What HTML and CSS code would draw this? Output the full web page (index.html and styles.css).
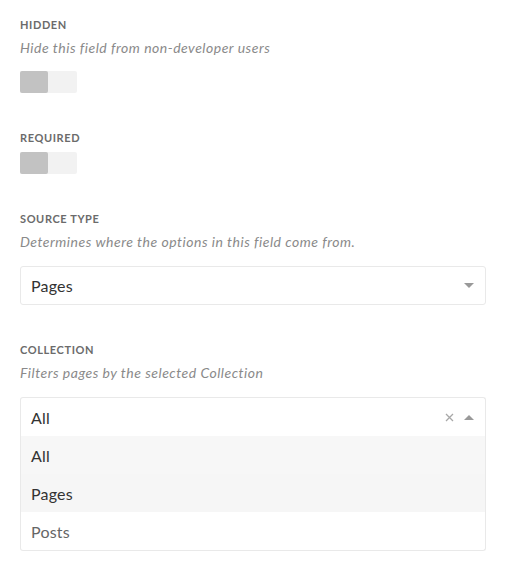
FILE: index.html
```html
<!DOCTYPE html>
<html>
<head>
<meta charset="utf-8">
<link rel="stylesheet" href="styles.css">
</head>
<body>
<div class="form">
  <div class="field">
    <div class="label">Hidden</div>
    <div class="desc">Hide this field from non-developer users</div>
    <div class="toggle toggle-desc"><span class="knob"></span></div>
  </div>
  <div class="field">
    <div class="label">Required</div>
    <div class="toggle toggle-label"><span class="knob"></span></div>
  </div>
  <div class="field">
    <div class="label">Source Type</div>
    <div class="desc">Determines where the options in this field come from.</div>
    <div class="select">
      <span class="value">Pages</span>
      <span class="caret caret-down"></span>
    </div>
  </div>
  <div class="field">
    <div class="label">Collection</div>
    <div class="desc">Filters pages by the selected Collection</div>
    <div class="dropdown">
      <div class="select select-open">
        <span class="value">All</span>
        <span class="clear">
          <svg width="9" height="9" viewBox="0 0 9 9"><path d="M1 1L8 8M8 1L1 8" stroke="#a8a8a8" stroke-width="1.3" fill="none"/></svg>
        </span>
        <span class="caret caret-up"></span>
      </div>
      <div class="menu">
        <div class="option option-selected">All</div>
        <div class="option option-focused">Pages</div>
        <div class="option">Posts</div>
      </div>
    </div>
  </div>
</div>
</body>
</html>
```
FILE: styles.css
```css
html, body {
  margin: 0;
  padding: 0;
  background: #ffffff;
}
body {
  font-family: Lato, "Noto Sans", sans-serif;
  color: #333;
}
.form {
  padding: 17px 34px 0 20px;
}
.field {
  margin-bottom: 37px;
}
.label {
  font-size: 11px;
  line-height: 16px;
  font-weight: 700;
  letter-spacing: 0.6px;
  text-transform: uppercase;
  color: #6b6b6b;
}
.desc {
  margin-top: 7px;
  font-size: 14px;
  line-height: 16px;
  font-style: italic;
  color: #8a8a8a;
  letter-spacing: 0.5px;
}
.toggle {
  width: 57px;
  height: 22px;
  background: #f2f2f2;
  border-radius: 2px;
  display: flex;
}
.toggle-desc { margin-top: 15px; }
.toggle-label { margin-top: 6px; }
.knob {
  width: 28px;
  height: 22px;
  background: #c2c2c2;
  border-radius: 2px;
}
.select {
  margin-top: 16px;
  height: 37px;
  border: 1px solid #e9e9e9;
  border-radius: 3px;
  display: flex;
  align-items: center;
  padding: 0 11px 0 10px;
  background: #fff;
}
.value {
  flex: 1;
  font-size: 16px;
  color: #333;
  letter-spacing: 0.2px;
}
.caret {
  width: 0;
  height: 0;
  border-left: 5px solid transparent;
  border-right: 5px solid transparent;
}
.caret-down {
  border-top: 5px solid #999;
}
.caret-up {
  border-bottom: 5px solid #999;
}
.clear {
  display: flex;
  margin-right: 10px;
}
.dropdown .select {
  border-bottom: none;
  border-radius: 3px 3px 0 0;
  height: 38px;
}
.menu {
  border: 1px solid #e9e9e9;
  border-top: none;
  border-radius: 0 0 3px 3px;
}
.option {
  height: 38px;
  display: flex;
  align-items: center;
  padding-left: 10px;
  font-size: 16px;
  color: #666;
  letter-spacing: 0.2px;
}
.option-selected {
  background: #f7f7f7;
  color: #333;
}
.option-focused {
  background: #f6f6f6;
  color: #333;
}
```
